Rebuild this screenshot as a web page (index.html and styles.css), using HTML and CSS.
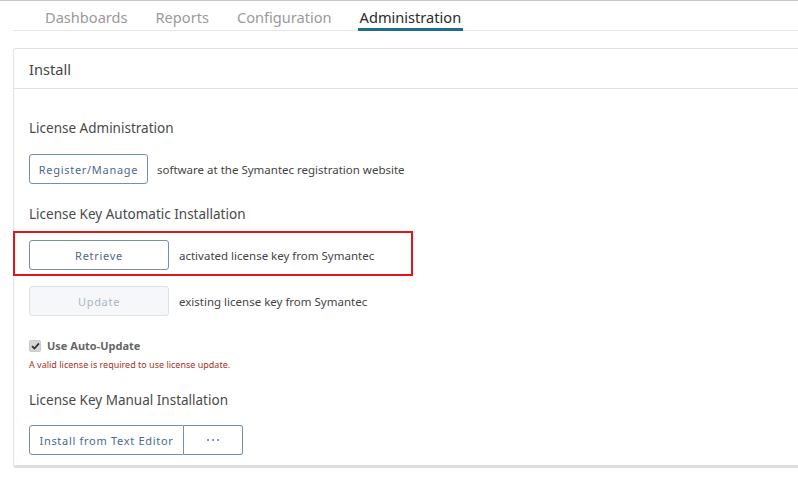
FILE: index.html
```html
<!DOCTYPE html>
<html>
<head>
<meta charset="utf-8">
<link rel="stylesheet" href="styles.css">
</head>
<body>
<div class="page">
  <nav class="tabs">
    <a class="tab">Dashboards</a>
    <a class="tab">Reports</a>
    <a class="tab">Configuration</a>
    <a class="tab active">Administration</a>
  </nav>
  <section class="card">
    <header class="card-head">Install</header>
    <div class="card-body">
      <h3 class="sec-title first">License Administration</h3>
      <div class="row">
        <button class="btn btn-reg">Register/Manage</button>
        <span class="desc">software at the Symantec registration website</span>
      </div>
      <h3 class="sec-title">License Key Automatic Installation</h3>
      <div class="row row-mark">
        <button class="btn btn-wide">Retrieve</button>
        <span class="desc desc-wide">activated license key from Symantec</span>
      </div>
      <div class="row row-upd">
        <button class="btn btn-wide disabled">Update</button>
        <span class="desc desc-wide">existing license key from Symantec</span>
      </div>
      <label class="check">
        <span class="box"><svg width="9" height="8" viewBox="0 0 9 8"><path d="M1 4.2 L3.4 6.5 L8 1.4" fill="none" stroke="#333" stroke-width="1.8"/></svg></span>
        <span class="check-label">Use Auto-Update</span>
      </label>
      <p class="warn">A valid license is required to use license update.</p>
      <h3 class="sec-title manual">License Key Manual Installation</h3>
      <div class="group">
        <button class="btn seg seg-main">Install from Text Editor</button>
        <button class="btn seg seg-more" aria-label="More"><span class="dot"></span><span class="dot"></span><span class="dot"></span></button>
      </div>
    </div>
  </section>
</div>
</body>
</html>
```
FILE: styles.css
```css
html, body {
  margin: 0;
  padding: 0;
  background: #fff;
  overflow: hidden;
}
body {
  font-family: "Noto Sans", "Open Sans", sans-serif;
  color: #444;
  border-top: 1px solid #c8c8c8;
}
.page {
  width: 820px;
}
.tabs {
  display: flex;
  margin-left: 13px;
  padding-left: 30px;
  height: 29px;
  border-bottom: 1px solid #e6e6e6;
}
.tab {
  font-size: 14.6px;
  color: #9a9a9a;
  padding: 6px 2px 0;
  margin-right: 24px;
  line-height: 20px;
  box-sizing: border-box;
}
.tab.active {
  color: #2b2b2b;
  border-bottom: 3px solid #1d6e8c;
  height: 30px;
}
.card {
  margin: 17px 0 0 13px;
  border: 1px solid #e2e2e2;
  border-bottom: 3px solid #dedede;
  border-radius: 3px;
  box-sizing: border-box;
}
.card-head {
  height: 39px;
  padding-left: 15px;
  font-size: 14.6px;
  line-height: 40px;
  color: #444;
  border-bottom: 1px solid #e2e2e2;
}
.card-body {
  padding: 0 15px 10px;
  display: flex;
  flex-direction: column;
  align-items: flex-start;
}
.sec-title {
  font-size: 13.5px;
  font-weight: normal;
  color: #4a4a4a;
  margin: 20px 0 16px;
  line-height: 20px;
}
.sec-title.first {
  margin-top: 29px;
}
.row {
  display: flex;
  align-items: center;
}
.btn {
  font-family: "Noto Sans", "Open Sans", sans-serif;
  font-size: 11px;
  letter-spacing: 0.7px;
  color: #4b6a8c;
  background: #fff;
  border: 1px solid #7590ab;
  border-radius: 3px;
  height: 30px;
  padding: 0 8px;
  white-space: nowrap;
  cursor: pointer;
}
.btn-reg {
  width: 119px;
}
.btn-wide {
  width: 140px;
}
.desc {
  font-size: 11.5px;
  color: #444;
  margin-left: 9px;
}
.desc.desc-wide {
  margin-left: 10px;
}
.row-mark {
  position: relative;
}
.row-mark::after {
  content: "";
  position: absolute;
  left: -16px;
  top: -9px;
  width: 396px;
  height: 41px;
  border: 2px solid #e3141d;
}
.row-upd {
  margin-top: 16px;
}
.btn.disabled {
  background: #f5f7f9;
  border-color: #dde3ea;
  color: #a7b8ca;
}
.check {
  display: flex;
  align-items: center;
  margin-top: 22px;
  gap: 6px;
}
.box {
  width: 12px;
  height: 12px;
  border-radius: 2px;
  background: #d6d6d6;
  border: 1px solid #c9c9c9;
  box-sizing: border-box;
  display: flex;
  align-items: center;
  justify-content: center;
}
.check-label {
  font-size: 11px;
  font-weight: bold;
  color: #666;
  line-height: 16px;
}
.warn {
  margin: 4px 0 0;
  font-size: 9px;
  color: #a33322;
  line-height: 13px;
}
.sec-title.manual {
  margin-top: 19px;
  margin-bottom: 15px;
}
.group {
  display: flex;
}
.seg-main {
  width: 155px;
  border-radius: 3px 0 0 3px;
  padding: 0 6px;
}
.seg-more {
  width: 59px;
  border-left: none;
  border-radius: 0 3px 3px 0;
  display: flex;
  align-items: center;
  justify-content: center;
  gap: 3px;
}
.dot {
  width: 2px;
  height: 2px;
  border-radius: 50%;
  background: #5a7796;
}
```
